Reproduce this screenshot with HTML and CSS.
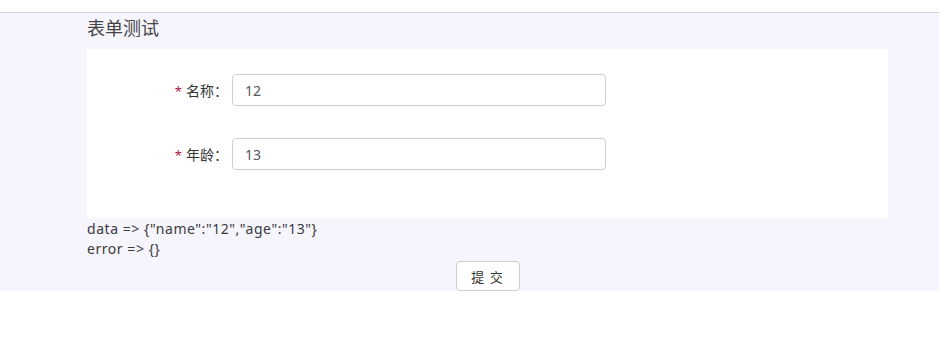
FILE: index.html
```html
<!DOCTYPE html>
<html lang="zh-CN">
<head>
  <meta charset="UTF-8">
  <title>表单测试</title>
  <link rel="stylesheet" href="styles.css">
</head>
<body>

  <div class="topbar"></div>

  <div class="page">
    <div class="container">
      <h2 class="title">表单测试</h2>

      <!-- 表单 -->
      <form class="card">
        <div class="form-row">
          <label class="form-label"><span class="required">*</span>名称：</label>
          <input class="form-input" type="text" value="12">
        </div>
        <div class="form-row">
          <label class="form-label"><span class="required">*</span>年龄：</label>
          <input class="form-input" type="text" value="13">
        </div>
      </form>

      <div class="output">
        <div>data =&gt; {"name":"12","age":"13"}</div>
        <div>error =&gt; {}</div>
      </div>

      <div class="actions">
        <button type="button" class="btn">提&nbsp;交</button>
      </div>
    </div>
  </div>

</body>
</html>
```

FILE: styles.css
```css
body {
  margin: 0;
  background: #fff;
  font-family: "Noto Sans", "Noto Sans CJK SC", sans-serif;
  color: #333;
}

.topbar {
  height: 12px;
  background: #fff;
}

.page {
  background: #f6f4fd;
  border-top: 1px solid #d4d3d8;
  height: 278px;
  margin-right: 3px;
}

.container {
  width: 801px;
  margin-left: 87px;
}

.title {
  margin: 0;
  height: 36px;
  line-height: 30px;
  font-size: 18px;
  font-weight: normal;
  color: #444;
}

.card {
  margin: 0;
  background: #fff;
  height: 169px;
  padding-top: 25px;
  box-sizing: border-box;
  display: flex;
  flex-direction: column;
  gap: 32px;
}

.form-row {
  display: flex;
  align-items: center;
}

.form-label {
  width: 141px;
  padding-right: 4px;
  text-align: right;
  font-size: 14px;
  color: #333;
}

.required {
  color: #b5124a;
  margin-right: 4px;
  font-size: 13px;
}

.form-input {
  width: 374px;
  height: 32px;
  box-sizing: border-box;
  border: 1px solid #cfcfcf;
  border-radius: 4px;
  padding: 0 12px;
  font-family: inherit;
  font-size: 14px;
  color: #555;
  background: #fff;
}

.output {
  padding-top: 1px;
  font-size: 14px;
  letter-spacing: 0.55px;
  line-height: 19.5px;
  color: #3a3a3a;
}

.actions {
  display: flex;
  justify-content: center;
  padding-top: 3px;
}

.btn {
  width: 64px;
  height: 30px;
  border: 1px solid #cfcfcf;
  border-radius: 4px;
  background: #fff;
  font-family: inherit;
  font-size: 13px;
  letter-spacing: 1px;
  color: #333;
  cursor: pointer;
}
```
